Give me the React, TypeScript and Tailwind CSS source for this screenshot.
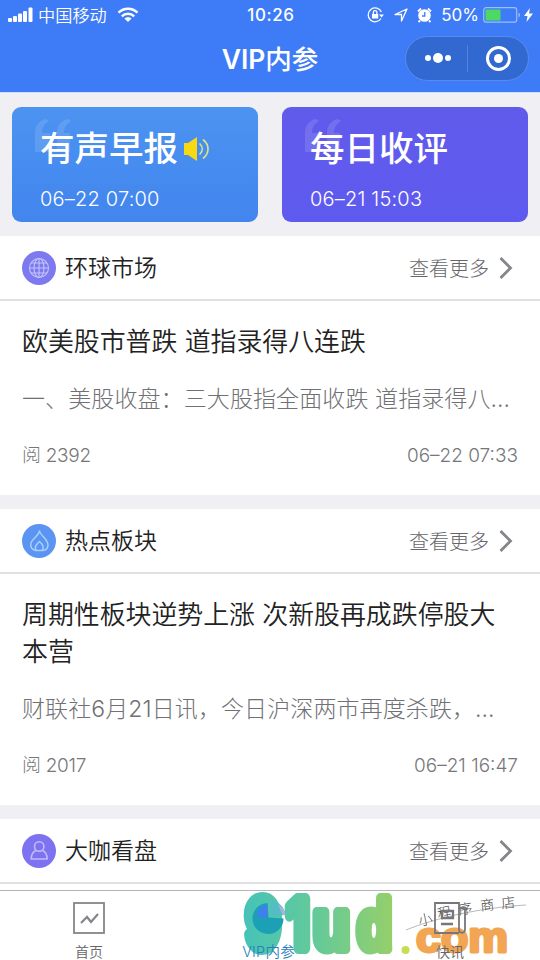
import type { ReactNode } from "react";

const sections = [
  {
    name: "环球市场",
    icon: <GlobeIcon />,
    color: "bg-[#7d7aef]",
    title: "欧美股市普跌 道指录得八连跌",
    excerpt: "一、美股收盘：三大股指全面收跌 道指录得八…",
    views: "2392",
    date: "06–22 07:33",
  },
  {
    name: "热点板块",
    icon: <FlameIcon />,
    color: "bg-[#5b94f2]",
    title: "周期性板块逆势上涨 次新股再成跌停股大本营",
    excerpt: "财联社6月21日讯，今日沪深两市再度杀跌，…",
    views: "2017",
    date: "06–21 16:47",
  },
];

function GlobeIcon() {
  return (
    <svg viewBox="0 0 34 34" className="size-[34px]" fill="none" stroke="#c3c4fb" strokeWidth="1.1">
      <circle cx="17" cy="17" r="9.5" />
      <ellipse cx="17" cy="17" rx="5" ry="9.5" />
      <path d="M17 7.5v19M7.5 17h19M9.2 12h15.6M9.2 22h15.6" />
    </svg>
  );
}

function FlameIcon() {
  return (
    <svg viewBox="0 0 34 34" className="size-[34px]" fill="none" stroke="#a9d0fb" strokeWidth="1.5" strokeLinejoin="round">
      <path d="M17.5 7c.6 4.2 8.5 8 8.5 14 0 3-2 5-5 5.5h-7.5c-3-.8-4.8-3-4.8-6 0-5 7.3-7.5 8.8-13.5Z" />
      <path d="M14.5 26.5c-2.5-2.5-1-5.5 3-9 3.5 3 5 6.5 2.5 9" />
    </svg>
  );
}

function PersonIcon() {
  return (
    <svg viewBox="0 0 34 34" className="size-[34px]" fill="none" stroke="#bfbdfb" strokeWidth="1.6" strokeLinejoin="round">
      <circle cx="17.2" cy="12.5" r="4.7" />
      <path d="M13.8 16.5c-3 1.5-4.6 4.5-4.6 8.5h16c0-4-1.6-7-4.6-8.5" />
    </svg>
  );
}

function StatusBar() {
  return (
    <div className="flex h-[30px] items-center justify-between pl-2 pr-[7px]">
      <div className="flex w-[220px] items-center">
        <svg viewBox="0 0 25 16" className="h-4 w-[25px]" fill="#fff">
          <rect x="0" y="11" width="4" height="4" rx="1" />
          <rect x="5" y="9" width="4" height="6" rx="1" />
          <rect x="10" y="6.5" width="4" height="8.5" rx="1" />
          <rect x="15" y="4" width="4" height="11" rx="1" />
          <rect x="20.5" y="0.5" width="4" height="14.5" rx="1" />
        </svg>
        <span className="ml-[5px] pt-px text-[17.2px] font-[350]">中国移动</span>
        <svg viewBox="0 0 22 16" className="ml-[10px] h-4 w-[22px]" fill="none" stroke="#fff" strokeWidth="2.5">
          <path d="M1.5 5.7a13.5 13.5 0 0 1 19 0" />
          <path d="M4.8 9.3a9 9 0 0 1 12.4 0" />
          <path d="M11 15 7.4 11.5a5.5 5.5 0 0 1 7.2 0Z" fill="#fff" stroke="none" />
        </svg>
      </div>
      <span className="pl-px pt-px text-[17px] font-medium tracking-[0.6px]">10:26</span>
      <div className="flex w-[220px] items-center justify-end">
        <svg viewBox="0 0 18 16" className="h-4 w-[18px]" fill="none" stroke="#fff" strokeWidth="1.3">
          <path d="M14.4 5A6.9 6.9 0 1 0 14 11.5" />
          <path d="M12 7.5h5l-2.5 3Z" fill="#fff" stroke="none" />
          <rect x="5" y="7" width="6.2" height="4.5" fill="#fff" stroke="none" />
          <path d="M6.3 7V5.5a1.8 1.8 0 0 1 3.6 0V7" />
        </svg>
        <svg viewBox="0 0 14 14" className="ml-[9px] size-[14px]" fill="none" stroke="#fff" strokeWidth="1.3" strokeLinejoin="round">
          <path d="M13 1 1 6.5h6.5V13Z" />
        </svg>
        <svg viewBox="0 0 15 16" className="ml-[9px] h-4 w-[15px]">
          <circle cx="7.5" cy="8.5" r="6.3" fill="#fff" />
          <path d="M1 4.5 4 1.5M14 4.5l-3-3M3 13.5l-1.5 1.5M12 13.5l1.5 1.5" stroke="#fff" strokeWidth="1.8" />
          <path d="M7.8 5v4H5" fill="none" stroke="#3e7bf6" strokeWidth="1.3" />
        </svg>
        <span className="ml-[9px] pt-px text-[17px]">50%</span>
        <svg viewBox="0 0 38 18" className="ml-[4px] h-[18px] w-[38px]">
          <rect x="0.7" y="1.7" width="33" height="14.5" rx="2.5" fill="none" stroke="#9dbdfb" strokeWidth="1.2" />
          <rect x="2.5" y="3.5" width="15" height="11" fill="#4cd964" />
          <path d="M35.5 6.5c2 1 2 4 0 5Z" fill="#9dbdfb" />
        </svg>
        <svg viewBox="0 0 9 14" className="ml-[3px] h-[14px] w-[9px]" fill="#fff">
          <path d="M6 0 0 8h3.5L2.5 14 9 5.5H5Z" />
        </svg>
      </div>
    </div>
  );
}

function NavBar() {
  return (
    <div className="grid grid-cols-[1fr_auto_1fr] items-center">
      <span />
      <h1 className="pt-[2px] text-[26.5px] font-medium leading-[54px]">
        <span className="font-semibold">VIP</span>内参
      </h1>
      <div className="mr-[11px] flex h-[45px] w-[124px] items-center justify-self-end rounded-full border border-[#5a8bf0] bg-[#3269d0]">
        <div className="flex w-[61px] items-center justify-center gap-[2px] pl-[2px]">
          <i className="size-[6px] rounded-full bg-white" />
          <i className="size-[10px] rounded-full bg-white" />
          <i className="size-[6px] rounded-full bg-white" />
        </div>
        <div className="h-[27px] w-px bg-[#5583dc]" />
        <div className="flex flex-1 justify-center">
          <div className="flex size-[25px] items-center justify-center rounded-full border-[3px] border-white">
            <i className="size-[9px] rounded-full bg-white" />
          </div>
        </div>
      </div>
    </div>
  );
}

function QuoteMark() {
  return (
    <svg viewBox="0 0 38 34" className="absolute left-[22px] top-[12px] h-[34px] w-[38px]" fill="#fff" opacity="0.12">
      <path d="M15 2c-5 3-7 7-7 12h8v19H1V14C1 6 6 1 12 0Z" />
      <path d="M37 2c-5 3-7 7-7 12h6v19H23V14c0-8 5-13 11-14Z" />
    </svg>
  );
}

function Banner({ title, time, className, children }: { title: string; time: string; className: string; children?: ReactNode }) {
  return (
    <div className={`relative h-[115px] w-[246px] overflow-hidden rounded-[9px] pl-7 pt-[17px] text-white ${className}`}>
      <QuoteMark />
      <div className="relative flex items-center">
        <span className="text-[34.5px] font-medium leading-[50px]">{title}</span>
        {children}
      </div>
      <div className="relative mt-[10px] text-[20px] font-light leading-[30px] tracking-[0.2px]">{time}</div>
    </div>
  );
}

function SectionHeader({ name, icon, color }: { name: string; icon: ReactNode; color: string }) {
  return (
    <div className="flex h-[65px] items-center border-b-2 border-[#e0e0e2] pl-[22px] pr-[27px]">
      <div className={`flex size-[34px] items-center justify-center rounded-full ${color}`}>{icon}</div>
      <h2 className="ml-[9px] flex-1 pt-[2px] text-[23px] font-[350] text-[#222]">{name}</h2>
      <span className="pt-[2px] text-[20px] font-light text-[#66666a]">查看更多</span>
      <svg viewBox="0 0 14 22" className="ml-[10px] h-[22px] w-[14px]" fill="none" stroke="#85858a" strokeWidth="2.8">
        <path d="m1.5 1 10 10-10 10" />
      </svg>
    </div>
  );
}

function TabBar() {
  return (
    <nav className="relative grid h-[70px] grid-cols-3 border-t border-[#b5b5b8] bg-white text-[14px] font-[350] text-[#66666a]">
      <Watermark />
      <div className="flex flex-col items-center pr-[2px] pt-[11px]">
        <svg viewBox="0 0 32 32" className="size-8" fill="none" stroke="#85858a" strokeWidth="1.8">
          <rect x="1" y="1" width="30" height="30" />
          <path d="m8 21 6-6 4 5 7-8" strokeWidth="2.2" />
        </svg>
        <span className="mt-[8px] leading-[20px]">首页</span>
      </div>
      <div className="relative flex flex-col items-center pr-[3px] pt-[9px] text-[#287fbb]">
        <svg viewBox="0 0 34 34" className="h-[34px] w-[34px]">
          <path d="M15.5 3a15.5 15.5 0 1 0 16 15.5l-15-1Z" fill="#1ba0b5" />
          <path d="M15.5 5v13l-10-1.5c-1-6 3-11 10-11.5Z" fill="#3f7fee" />
          <path d="M18.5 1c8 0 14 6 15 14l-15 1Z" fill="#54bdc3" />
          <path d="M26 4c4 3 7 6 7.5 11h-3Z" fill="#a9b3dc" />
        </svg>
        <span className="mt-[8px] text-[14.5px] leading-[20px] tracking-[0.2px]">VIP内参</span>
      </div>
      <div className="relative flex flex-col items-center pt-[11px]">
        <svg viewBox="0 0 32 32" className="size-8" fill="none" stroke="#77777b" strokeWidth="1.8">
          <path d="M25 31H1V1h24v26c0 5 6 5 6 0V6h-6" />
          <path d="M8 9h11v7H8zM7 22h12" strokeWidth="2.3" />
        </svg>
        <span className="mt-[8px] leading-[20px]">快讯</span>
      </div>
    </nav>
  );
}

function Watermark() {
  return (
    <svg viewBox="230 890 310 70" className="pointer-events-none absolute left-[230px] top-[-1px] h-[70px] w-[310px] overflow-visible">
      <defs>
        <linearGradient id="logo" gradientUnits="userSpaceOnUse" x1="243" y1="0" x2="393" y2="0">
          <stop offset="0" stopColor="#45c3b8" />
          <stop offset="0.5" stopColor="#65ca98" />
          <stop offset="1" stopColor="#96cf6a" />
        </linearGradient>
      </defs>
      <g fill="url(#logo)" stroke="url(#logo)" strokeWidth="10" strokeLinejoin="round" fontFamily="Liberation Sans, sans-serif" fontWeight="700" fontSize="70">
        <text x="246" y="948" textLength="34" lengthAdjust="spacingAndGlyphs" fontFamily="Inter, sans-serif" fontSize="67" strokeWidth="12">9</text>
        <text x="287" y="948" fontFamily="Inter, sans-serif" fontSize="67" textLength="22" lengthAdjust="spacingAndGlyphs" strokeWidth="12">1</text>
        <text x="313" y="949" textLength="37" lengthAdjust="spacingAndGlyphs">u</text>
        <text x="357" y="949" textLength="35" lengthAdjust="spacingAndGlyphs">d</text>
      </g>
      <circle cx="405.5" cy="950" r="4" fill="#c6df52" />
      <text x="416" y="952" fill="#f2a552" stroke="#f2a552" strokeWidth="3" strokeLinejoin="round" fontFamily="Liberation Sans, sans-serif" fontWeight="700" fontSize="42" textLength="92" lengthAdjust="spacingAndGlyphs">com</text>
      <path d="M406 930c30-12 72-22 120-25" fill="none" stroke="#999" strokeWidth="0.7" />
      <g fontSize="14" fill="#444" fontWeight="300">
        <text x="418" y="925" transform="rotate(-12 424 919)">小</text>
        <text x="437" y="918" transform="rotate(-12 444 912)">程</text>
        <text x="458" y="914" transform="rotate(-10 465 908)">序</text>
        <text x="480" y="910" transform="rotate(-6 487 904)">商</text>
        <text x="501" y="908" transform="rotate(-6 507 901)">店</text>
      </g>
    </svg>
  );
}

export default function App() {
  return (
    <div className="flex h-[960px] w-[540px] flex-col overflow-hidden bg-[#f0eff4] font-['Inter','Noto_Sans_CJK_SC',sans-serif]">
      <header className="h-[92px] bg-[#3e7bf6] text-white">
        <StatusBar />
        <NavBar />
      </header>

      <main className="flex flex-1 flex-col overflow-hidden">
        <div className="flex h-[144px] shrink-0 justify-between border-t border-[#c9e1fc] px-3 pt-[14px]">
          <Banner title="有声早报" time="06–22 07:00" className="bg-linear-to-b from-[#4c93f1] to-[#4285ee]">
            <svg viewBox="0 0 26 24" className="ml-[6px] h-6 w-[26px]" fill="none" strokeLinecap="round">
              <path d="M0 6h4l9-6v24l-9-6H0Z" fill="#f7d911" />
              <path d="M16 7c3 3 3 7 0 10" stroke="#d8e28a" strokeWidth="1.7" />
              <path d="M19.5 3c6 5 6 13 0 18" stroke="#d8e28a" strokeWidth="1.7" />
            </svg>
          </Banner>
          <Banner title="每日收评" time="06–21 15:03" className="bg-linear-to-b from-[#615bec] to-[#5f5aef]" />
        </div>

        {sections.map((s) => (
          <section key={s.name} className="mb-[14px] shrink-0 bg-white">
            <SectionHeader name={s.name} icon={s.icon} color={s.color} />
            <article className="px-[22px] pb-[25px] pt-[22px]">
              <h3 className="text-[25.9px] font-[350] leading-[37px] text-[#222]">{s.title}</h3>
              <p className="mt-[21px] whitespace-nowrap text-[23px] font-light leading-[36px] tracking-[0.1px] text-[#707075]">{s.excerpt}</p>
              <div className="mt-[24px] flex justify-between text-[19px] font-light leading-[29px] text-[#77777b]">
                <span className="tracking-[-0.3px]">阅 {s.views}</span>
                <time>{s.date}</time>
              </div>
            </article>
          </section>
        ))}

        <section className="flex-1 bg-white">
          <SectionHeader name="大咖看盘" icon={<PersonIcon />} color="bg-[#7d72f0]" />
        </section>
      </main>

      <TabBar />
    </div>
  );
}
